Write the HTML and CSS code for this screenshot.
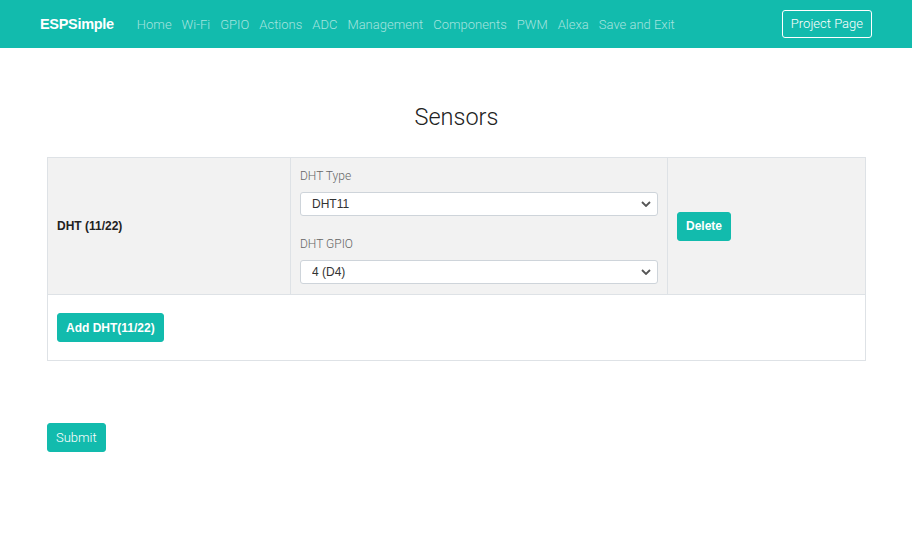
FILE: index.html
```html
<!DOCTYPE html>
<html lang="en">
<head>
<meta charset="utf-8">
<title>ESPSimple - Sensors</title>
<link rel="stylesheet" href="styles.css">
</head>
<body>
<nav class="navbar">
  <a class="brand" href="#">ESPSimple</a>
  <ul class="nav">
    <li><a href="#">Home</a></li>
    <li><a href="#">Wi-Fi</a></li>
    <li><a href="#">GPIO</a></li>
    <li><a href="#">Actions</a></li>
    <li><a href="#">ADC</a></li>
    <li><a href="#">Management</a></li>
    <li><a href="#">Components</a></li>
    <li><a href="#">PWM</a></li>
    <li><a href="#">Alexa</a></li>
    <li><a href="#">Save and Exit</a></li>
  </ul>
  <a class="btn-outline" href="#">Project Page</a>
</nav>
<main class="container">
  <h1 class="title">Sensors</h1>
  <table class="sensors">
    <tr class="row-dht">
      <td class="cell-name">DHT (11/22)</td>
      <td class="cell-fields">
        <label class="field-label">DHT Type</label>
        <select class="select first">
          <option>DHT11</option>
          <option>DHT22</option>
        </select>
        <label class="field-label">DHT GPIO</label>
        <select class="select">
          <option>4 (D4)</option>
        </select>
      </td>
      <td class="cell-action"><button class="btn btn-bold">Delete</button></td>
    </tr>
    <tr class="row-add">
      <td colspan="3" class="cell-add"><button class="btn btn-bold">Add DHT(11/22)</button></td>
    </tr>
  </table>
  <button class="btn btn-submit">Submit</button>
</main>
</body>
</html>
```
FILE: styles.css
```css
* { box-sizing: border-box; }
body {
  margin: 0;
  font-family: Roboto, "Liberation Sans", sans-serif;
  font-weight: 300;
  color: #333;
  background: #fff;
}
.navbar {
  height: 48px;
  background: #12bbad;
  display: flex;
  align-items: center;
  padding: 0 40px;
}
.brand {
  color: #fff;
  font-family: "Liberation Sans", Arial, sans-serif;
  font-weight: 700;
  font-size: 14.5px;
  text-decoration: none;
  margin-right: 18px;
  letter-spacing: -0.3px;
}
.nav {
  list-style: none;
  margin: 0;
  padding: 0;
  display: flex;
  flex: 1;
}
.nav a {
  display: block;
  padding: 0 5px;
  font-size: 13px;
  color: rgba(255,255,255,0.62);
  text-decoration: none;
}
.btn-outline {
  color: #fff;
  font-size: 13px;
  text-decoration: none;
  border: 1px solid #fff;
  border-radius: 3px;
  padding: 0 8px;
  height: 28px;
  line-height: 26px;
}
.container {
  padding: 0 46px 0 47px;
}
.title {
  text-align: center;
  font-size: 23.5px;
  font-weight: 300;
  margin: 54px 0 25px;
  line-height: 30px;
  color: #222;
}
.sensors {
  width: 100%;
  border-collapse: collapse;
  font-size: 12px;
}
.sensors td {
  border: 1px solid #dee2e6;
  vertical-align: middle;
}
.row-dht td { background: #f2f2f2; }
.cell-name {
  width: 243px;
  padding: 0 9px;
  font-family: "Liberation Sans", Arial, sans-serif;
  font-weight: 700;
  color: #222;
}
.cell-fields {
  width: 377px;
  padding: 9px 9px 10px 9px;
}
.field-label {
  display: block;
  font-size: 12px;
  line-height: 18px;
  color: #666;
  margin-bottom: 7px;
}
.select {
  display: block;
  width: 100%;
  height: 24px;
  font-family: "Liberation Sans", Arial, sans-serif;
  font-size: 12px;
  font-weight: 400;
  color: #333;
  padding: 0 24px 0 11px;
  border: 1px solid #ced4da;
  border-radius: 3px;
  background: #fff url("data:image/svg+xml,%3Csvg xmlns='http://www.w3.org/2000/svg' width='10' height='6' viewBox='0 0 10 6'%3E%3Cpath d='M1 1l4 4 4-4' fill='none' stroke='%23555' stroke-width='1.8'/%3E%3C/svg%3E") no-repeat right 6px center;
  appearance: none;
  -webkit-appearance: none;
}
.select.first { margin-bottom: 19px; }
.cell-action {
  padding: 0 9px;
}
.cell-add {
  background: #fff;
  padding: 18px 9px 18px;
}
.btn {
  font-family: "Liberation Sans", Arial, sans-serif;
  background: #12bbad;
  color: #fff;
  border: 1px solid #12bbad;
  border-radius: 3px;
  cursor: pointer;
  height: 29px;
  padding: 0 8px;
  font-size: 12px;
}
.btn-bold { font-weight: 700; }
.btn-submit {
  font-family: Roboto, "Liberation Sans", sans-serif;
  margin-top: 62px;
  font-size: 13px;
  font-weight: 300;
  padding: 0 8px;
}
```
